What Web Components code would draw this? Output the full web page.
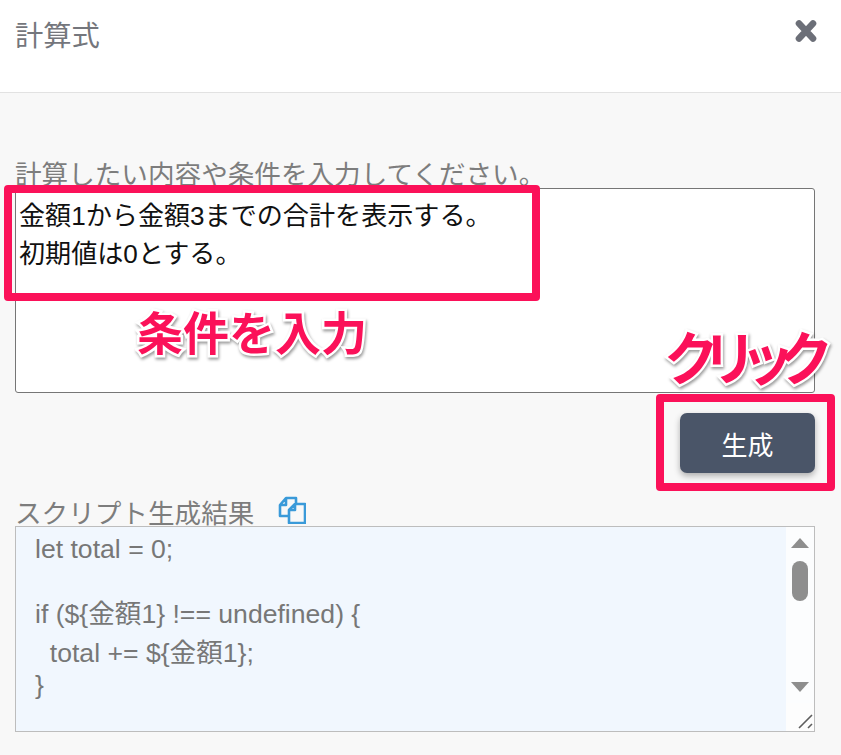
<!DOCTYPE html>
<html lang="ja">
<head>
<meta charset="utf-8">
<title>計算式</title>
<style>
  html,body{margin:0;padding:0;overflow:hidden;background:#f8f8f8;}
  body{font-family:"Liberation Sans","Noto Sans CJK JP",sans-serif;}
</style>
</head>
<body>

<calc-dialog>
  <dialog-head>計算式</dialog-head>
  <div slot="body">
    <field-label>計算したい内容や条件を入力してください。</field-label>
    <input-box>
      <div>金額1から金額3までの合計を表示する。</div>
      <div>初期値は0とする。</div>
    </input-box>
    <action-row>生成</action-row>
    <field-label copy>スクリプト生成結果</field-label>
    <code-box>
      <div class="l">let total = 0;</div>
      <div class="l">&nbsp;</div>
      <div class="l">if (${金額1} !== undefined) {</div>
      <div class="l t">&nbsp;&nbsp;total += ${金額1};</div>
      <div class="l">}</div>
    </code-box>
  </div>
  <div slot="notes">
    <mark-box style="left:4px;top:185px;width:536px;height:116px"></mark-box>
    <mark-box style="left:656px;top:394px;width:179px;height:97px"></mark-box>
    <call-out style="left:137px;top:298px;font-size:46px">条件を入力</call-out>
    <call-out wide style="left:664px;top:315px;font-size:58px">クリック</call-out>
  </div>
</calc-dialog>

<script>
class CalcDialog extends HTMLElement{
  constructor(){
    super();
    this.attachShadow({mode:"open"}).innerHTML=`
      <style>
        :host{display:flex;flex-direction:column;position:relative;width:841px;height:755px;overflow:hidden;background:#f8f8f8;}
        .body{padding:63px 26px 0 15px;}
      </style>
      <slot></slot>
      <div class="body"><slot name="body"></slot></div>
      <slot name="notes"></slot>`;
  }
}
class DialogHead extends HTMLElement{
  constructor(){
    super();
    this.attachShadow({mode:"open"}).innerHTML=`
      <style>
        :host{display:flex;justify-content:space-between;box-sizing:border-box;height:93px;padding:16px 22px 0 15px;background:#fff;border-bottom:1px solid #e2e2e2;color:#74767c;font-size:28.3px;line-height:40px;}
        svg{width:26px;height:26px;margin-top:2px;}
      </style>
      <slot></slot>
      <svg viewBox="0 0 26 26"><path d="M6 5.5 20 20.5M20 5.5 6 20.5" stroke="#6c6f78" stroke-width="6.6" stroke-linecap="round" fill="none"/></svg>`;
  }
}
class FieldLabel extends HTMLElement{
  constructor(){
    super();
    var icon=this.hasAttribute("copy")?`<svg viewBox="0 0 28 28"><path d="M10 20H2V9L8 2H18V7M8 2V9H2M17 8H27V27H11V14ZM17 8V14H11" fill="none" stroke="#3a9ad9" stroke-width="2.6" stroke-linejoin="round"/></svg>`:"";
    this.attachShadow({mode:"open"}).innerHTML=`
      <style>
        :host{display:flex;align-items:center;height:32px;color:#7d7d7d;font-size:26.6px;white-space:nowrap;}
        svg{width:28px;height:28px;margin:-2px 0 0 24px;}
      </style>
      <slot></slot>${icon}`;
  }
}
class InputBox extends HTMLElement{
  constructor(){
    super();
    this.attachShadow({mode:"open"}).innerHTML=`
      <style>
        :host{display:block;box-sizing:border-box;height:205px;padding:8px 3px;background:#fff;border:1px solid #767676;border-radius:3px;color:#111;font-size:26.1px;line-height:38px;}
        ::slotted(div){height:38px;}
      </style>
      <slot></slot>`;
  }
}
class ActionRow extends HTMLElement{
  constructor(){
    super();
    this.attachShadow({mode:"open"}).innerHTML=`
      <style>
        :host{display:flex;justify-content:flex-end;margin:20px 0 22px;}
        button{width:135px;height:60px;border:0;border-radius:7px;background:#4a5568;color:#fff;font:26px "Liberation Sans","Noto Sans CJK JP",sans-serif;box-shadow:0 3px 6px rgba(0,0,0,.3);}
      </style>
      <button><slot></slot></button>`;
  }
}
class CodeBox extends HTMLElement{
  constructor(){
    super();
    this.attachShadow({mode:"open"}).innerHTML=`
      <style>
        :host{display:flex;box-sizing:border-box;height:206px;margin-top:-1px;background:#fcfdfe;border:1px solid #bdbdbd;color:#777;font-size:26.6px;}
        .text{flex:1;padding:6px 0 0 19px;background:#f1f7fe;overflow:hidden;}
        ::slotted(.l){height:32.5px;line-height:32.5px;white-space:pre;}
        ::slotted(.t){height:38px;line-height:44px;}
        .bar{display:flex;flex-direction:column;align-items:center;width:28px;}
        .up,.down{width:0;height:0;border:9.5px solid transparent;}
        .up{margin-top:11px;border-top:0;border-bottom:10px solid #8e8e8e;}
        .thumb{width:16px;height:40px;margin-top:13px;border-radius:8px;background:#8e8e8e;}
        .down{margin-top:81px;border-bottom:0;border-top:10px solid #8e8e8e;}
        .corner{width:28px;height:28px;margin-top:11px;background:#fdfdfd;}
        .corner svg{display:block;width:28px;height:28px;}
      </style>
      <div class="text"><slot></slot></div>
      <div class="bar">
        <div class="up"></div>
        <div class="thumb"></div>
        <div class="down"></div>
        <div class="corner"><svg viewBox="0 0 28 28"><path d="M13 25 26 12M22 25 26 21" stroke="#5e5e5e" stroke-width="1.6" fill="none"/></svg></div>
      </div>`;
  }
}
class MarkBox extends HTMLElement{
  constructor(){
    super();
    this.attachShadow({mode:"open"}).innerHTML=`
      <style>
        :host{display:block;position:absolute;box-sizing:border-box;border:8px solid #fb1159;border-radius:4px;}
      </style>`;
  }
}
class CallOut extends HTMLElement{
  constructor(){
    super();
    this.attachShadow({mode:"open"}).innerHTML=`
      <style>
        :host{display:block;position:absolute;white-space:nowrap;color:#fb1159;font-family:"Noto Sans CJK JP",sans-serif;font-weight:700;line-height:1.4;-webkit-text-stroke:5px #fff;paint-order:stroke fill;filter:drop-shadow(1px 2px 1.5px rgba(0,0,0,.4));}
        :host([wide]){letter-spacing:-.3em;transform:scaleX(.94);transform-origin:left;}
      </style>
      <slot></slot>`;
  }
}
customElements.define("calc-dialog",CalcDialog);
customElements.define("dialog-head",DialogHead);
customElements.define("field-label",FieldLabel);
customElements.define("input-box",InputBox);
customElements.define("action-row",ActionRow);
customElements.define("code-box",CodeBox);
customElements.define("mark-box",MarkBox);
customElements.define("call-out",CallOut);
</script>
</body>
</html>
